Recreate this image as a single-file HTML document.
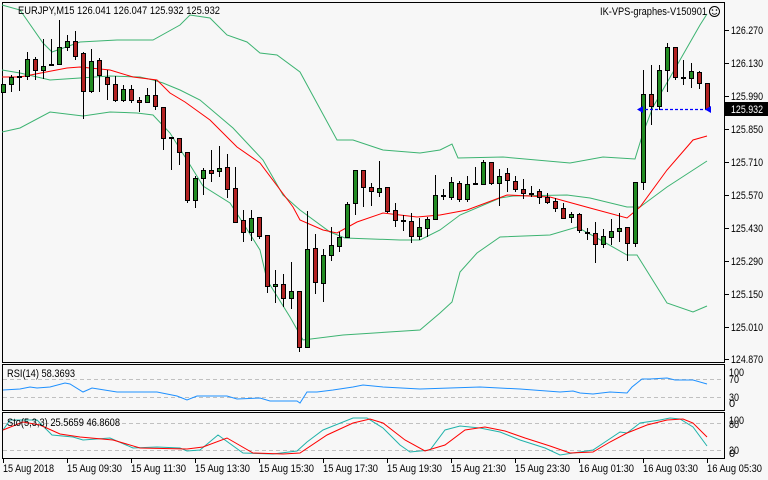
<!DOCTYPE html>
<html><head><meta charset="utf-8"><style>
html,body{margin:0;padding:0;background:#f7f7f7;}
svg{display:block;font-family:"Liberation Sans",sans-serif;font-size:11px;}
</style></head><body>
<svg width="768" height="480" viewBox="0 0 768 480" xmlns="http://www.w3.org/2000/svg">
<rect width="768" height="480" fill="#f7f7f7"/>
<g fill="none" stroke="#000" stroke-width="1" shape-rendering="crispEdges">
<rect x="2.5" y="2.5" width="722" height="360"/>
<rect x="2.5" y="364.5" width="722" height="46"/>
<rect x="2.5" y="412.5" width="722" height="46"/>
</g>
<g stroke="#c0c0c0" stroke-dasharray="4,3" shape-rendering="crispEdges">
<line x1="3" y1="379.5" x2="724" y2="379.5"/><line x1="3" y1="397.5" x2="724" y2="397.5"/>
<line x1="3" y1="423.5" x2="724" y2="423.5"/><line x1="3" y1="450.5" x2="724" y2="450.5"/>
</g>
<g fill="none" stroke="#3cb371" stroke-width="1">
<polyline points="2,5 20,10 43,43 52,52 80,42 117,40 153,40 180,25 190,15 210,18 227,35 247,42 260,53 277,55 300,72 337,140 353,140 383,150 420,153 440,150 452,144 458,158 503,157 570,163 603,157 635,159 643,133 653,107 680,60 700,25 707,14"/>
<polyline points="2,70 20,73 50,80 80,78 110,76 140,77 153,80 163,83 180,90 200,100 233,128 263,160 283,195 300,210 330,232 345,238 400,240 420,240 440,230 460,215 500,198 513,196 567,195 590,198 627,207 640,207 667,187 707,161"/>
<polyline points="2,132 20,128 50,112 83,116 110,112 137,113 153,115 170,133 187,160 203,186 230,203 243,223 260,250 267,280 290,317 303,340 343,335 420,330 440,313 452,302 460,272 477,253 500,237 550,235 577,227 597,238 627,255 637,255 667,303 693,312 707,306"/>
</g>
<polyline fill="none" stroke="#ff0000" stroke-width="1" points="2,77 20,77 67,68 80,67 110,70 133,77 157,80 170,93 185,102 210,120 237,147 260,163 293,207 300,220 323,230 337,233 357,222 383,213 417,217 440,215 467,210 507,195 550,197 590,208 627,218 640,207 667,170 693,140 707,136"/>
<g stroke="#000" stroke-width="1" shape-rendering="crispEdges">
<path d="M3.5 84V93M11.5 75V92M19.5 70V91M27.5 52V80M35.5 57V80M43.5 39V79M51.5 39V66M59.5 20V64M67.5 35V51M75.5 31V60M83.5 52V119M91.5 49V93M99.5 58V92M107.5 70V100M115.5 76V102M123.5 85V102M131.5 85V103M139.5 97V112M147.5 88V103M155.5 80V110M163.5 107V150M171.5 137V170M179.5 138V165M187.5 152V203M195.5 176V208M203.5 168V195M211.5 150V182M219.5 146V177M227.5 154V198M235.5 167V223M243.5 210V242M251.5 210V241M259.5 217V239M267.5 235V293M275.5 270V303M283.5 274V307M291.5 262V309M299.5 291V352M307.5 211V347M315.5 234V294M323.5 249V302M331.5 227V261M339.5 232V252M347.5 202V237M355.5 170V215M363.5 170V207M371.5 183V206M379.5 161V197M387.5 187V213M395.5 203V227M403.5 215V231M411.5 213V243M419.5 218V240M427.5 217V237M435.5 175V219M443.5 189V200M451.5 177V200M459.5 181V202M467.5 176V202M475.5 167V185M483.5 160V184M491.5 162V185M499.5 169V206M507.5 168V192M515.5 176V192M523.5 179V199M531.5 186V197M539.5 189V204M547.5 193V204M555.5 198V212M563.5 203V219M571.5 212V223M579.5 213V233M587.5 228V240M595.5 222V263M603.5 229V248M611.5 219V245M619.5 213V242M627.5 227V261M635.5 182V247M643.5 70V190M651.5 65V125M659.5 65V110M667.5 43V92M675.5 47V80M683.5 60V85M691.5 63V88M699.5 71V89M707.5 83V109"/>
</g>
<g stroke="#000" stroke-width="1" shape-rendering="crispEdges" fill="#228b22">
<rect x="1.5" y="84.5" width="4" height="8"/><rect x="9.5" y="77.5" width="4" height="7"/><rect x="17.5" y="76.5" width="4" height="1"/><rect x="25.5" y="59.5" width="4" height="17"/><rect x="41.5" y="66.5" width="4" height="4"/><rect x="49.5" y="64.5" width="4" height="1"/><rect x="57.5" y="47.5" width="4" height="17"/><rect x="65.5" y="41.5" width="4" height="6"/><rect x="89.5" y="61.5" width="4" height="30"/><rect x="121.5" y="89.5" width="4" height="11"/><rect x="145.5" y="95.5" width="4" height="7"/><rect x="169.5" y="137.5" width="4" height="1"/><rect x="193.5" y="178.5" width="4" height="22"/><rect x="201.5" y="170.5" width="4" height="8"/><rect x="217.5" y="168.5" width="4" height="3"/><rect x="249.5" y="218.5" width="4" height="14"/><rect x="273.5" y="284.5" width="4" height="2"/><rect x="289.5" y="291.5" width="4" height="7"/><rect x="305.5" y="249.5" width="4" height="98"/><rect x="321.5" y="255.5" width="4" height="28"/><rect x="329.5" y="245.5" width="4" height="10"/><rect x="337.5" y="237.5" width="4" height="9"/><rect x="345.5" y="204.5" width="4" height="33"/><rect x="353.5" y="170.5" width="4" height="33"/><rect x="377.5" y="188.5" width="4" height="4"/><rect x="401.5" y="220.5" width="4" height="1"/><rect x="417.5" y="227.5" width="4" height="9"/><rect x="425.5" y="219.5" width="4" height="9"/><rect x="433.5" y="195.5" width="4" height="24"/><rect x="441.5" y="195.5" width="4" height="1"/><rect x="449.5" y="182.5" width="4" height="15"/><rect x="465.5" y="184.5" width="4" height="15"/><rect x="473.5" y="183.5" width="4" height="1"/><rect x="481.5" y="162.5" width="4" height="22"/><rect x="497.5" y="176.5" width="4" height="7"/><rect x="529.5" y="193.5" width="4" height="1"/><rect x="569.5" y="214.5" width="4" height="3"/><rect x="585.5" y="232.5" width="4" height="1"/><rect x="601.5" y="236.5" width="4" height="8"/><rect x="609.5" y="231.5" width="4" height="6"/><rect x="617.5" y="228.5" width="4" height="3"/><rect x="633.5" y="182.5" width="4" height="61"/><rect x="641.5" y="94.5" width="4" height="88"/><rect x="657.5" y="70.5" width="4" height="36"/><rect x="665.5" y="47.5" width="4" height="23"/><rect x="681.5" y="77.5" width="4" height="1"/><rect x="689.5" y="71.5" width="4" height="7"/>
</g>
<g stroke="#000" stroke-width="1" shape-rendering="crispEdges" fill="#b22222">
<rect x="33.5" y="59.5" width="4" height="11"/><rect x="73.5" y="41.5" width="4" height="15"/><rect x="81.5" y="53.5" width="4" height="38"/><rect x="97.5" y="60.5" width="4" height="15"/><rect x="105.5" y="77.5" width="4" height="7"/><rect x="113.5" y="84.5" width="4" height="16"/><rect x="129.5" y="89.5" width="4" height="11"/><rect x="137.5" y="100.5" width="4" height="2"/><rect x="153.5" y="95.5" width="4" height="11"/><rect x="161.5" y="107.5" width="4" height="31"/><rect x="177.5" y="138.5" width="4" height="14"/><rect x="185.5" y="152.5" width="4" height="48"/><rect x="209.5" y="170.5" width="4" height="3"/><rect x="225.5" y="167.5" width="4" height="22"/><rect x="233.5" y="188.5" width="4" height="34"/><rect x="241.5" y="220.5" width="4" height="12"/><rect x="257.5" y="217.5" width="4" height="19"/><rect x="265.5" y="235.5" width="4" height="51"/><rect x="281.5" y="284.5" width="4" height="14"/><rect x="297.5" y="291.5" width="4" height="56"/><rect x="313.5" y="248.5" width="4" height="34"/><rect x="361.5" y="170.5" width="4" height="17"/><rect x="369.5" y="187.5" width="4" height="4"/><rect x="385.5" y="187.5" width="4" height="24"/><rect x="393.5" y="210.5" width="4" height="10"/><rect x="409.5" y="221.5" width="4" height="15"/><rect x="457.5" y="183.5" width="4" height="16"/><rect x="489.5" y="162.5" width="4" height="21"/><rect x="505.5" y="173.5" width="4" height="7"/><rect x="513.5" y="181.5" width="4" height="8"/><rect x="521.5" y="189.5" width="4" height="4"/><rect x="537.5" y="191.5" width="4" height="6"/><rect x="545.5" y="197.5" width="4" height="5"/><rect x="553.5" y="201.5" width="4" height="7"/><rect x="561.5" y="208.5" width="4" height="10"/><rect x="577.5" y="214.5" width="4" height="16"/><rect x="593.5" y="233.5" width="4" height="11"/><rect x="625.5" y="227.5" width="4" height="16"/><rect x="649.5" y="94.5" width="4" height="12"/><rect x="673.5" y="47.5" width="4" height="30"/><rect x="697.5" y="72.5" width="4" height="11"/><rect x="705.5" y="83.5" width="4" height="26"/>
</g>
<line x1="640" y1="109.5" x2="708" y2="109.5" stroke="#0000ff" stroke-width="1.2" stroke-dasharray="3,2"/>
<path d="M637 109.5 L643 106 L643 113Z M711 106 L711 113 L705 109.5Z" fill="#0000ff"/>
<polyline fill="none" stroke="#1e90ff" points="3,390 20,389 30,387 37,388 50,387 65,383 70,384 83,392 92,388 117,392 133,392 157,392 177,396 187,400 197,396 227,396 237,399 260,398 270,401 297,401 300,403 307,392 317,392 333,390 353,387 363,385 383,387 420,389 450,388 480,387 520,389 560,392 573,391 580,393 593,394 610,392 627,393 632,387 642,379 650,379 667,378 675,380 693,380 707,384"/>
<polyline fill="none" stroke="#20b2aa" points="3,430 10,420 37,420 52,435 73,437 83,440 110,438 133,448 157,447 180,448 187,451 200,450 218,435 243,453 273,454 297,451 307,442 323,430 353,418 367,418 383,428 400,445 410,452 430,450 445,430 460,426 480,428 500,432 520,440 545,448 560,455 593,450 620,432 627,433 640,423 660,420 670,418 680,419 693,427 707,446"/>
<polyline fill="none" stroke="#ff0000" points="3,430 23,422 40,425 60,434 80,437 113,440 140,448 187,449 203,447 227,438 253,453 283,454 300,453 327,435 353,423 370,419 383,423 405,440 425,451 445,445 465,430 485,427 505,431 525,438 550,446 570,453 593,452 610,442 627,433 647,425 667,420 683,419 693,423 707,437"/>
<g stroke="#000" shape-rendering="crispEdges">
<path d="M725 30.5h4M725 63.5h4M725 96.5h4M725 129.5h4M725 162.5h4M725 195.5h4M725 228.5h4M725 261.5h4M725 294.5h4M725 327.5h4M725 359.5h4"/>
<path d="M3.5 459v4M67.5 459v4M131.5 459v4M195.5 459v4M259.5 459v4M323.5 459v4M387.5 459v4M451.5 459v4M515.5 459v4M579.5 459v4M643.5 459v4M707.5 459v4"/>
</g>
<g fill="#000" lengthAdjust="spacingAndGlyphs">
<text x="731" y="34" textLength="32" lengthAdjust="spacingAndGlyphs">126.270</text><text x="731" y="67" textLength="32" lengthAdjust="spacingAndGlyphs">126.130</text><text x="731" y="100" textLength="32" lengthAdjust="spacingAndGlyphs">125.990</text><text x="731" y="133" textLength="32" lengthAdjust="spacingAndGlyphs">125.850</text><text x="731" y="166" textLength="32" lengthAdjust="spacingAndGlyphs">125.710</text><text x="731" y="199" textLength="32" lengthAdjust="spacingAndGlyphs">125.570</text><text x="731" y="232" textLength="32" lengthAdjust="spacingAndGlyphs">125.430</text><text x="731" y="265" textLength="32" lengthAdjust="spacingAndGlyphs">125.290</text><text x="731" y="298" textLength="32" lengthAdjust="spacingAndGlyphs">125.150</text><text x="731" y="331" textLength="32" lengthAdjust="spacingAndGlyphs">125.010</text><text x="731" y="363" textLength="32" lengthAdjust="spacingAndGlyphs">124.870</text>
<text x="729" y="376" textLength="15" lengthAdjust="spacingAndGlyphs">100</text><text x="729" y="383" textLength="10" lengthAdjust="spacingAndGlyphs">70</text><text x="729" y="401" textLength="10" lengthAdjust="spacingAndGlyphs">30</text><text x="729" y="407">0</text>
<text x="729" y="424" textLength="15" lengthAdjust="spacingAndGlyphs">100</text><text x="729" y="428" textLength="10" lengthAdjust="spacingAndGlyphs">80</text><text x="729" y="454" textLength="10" lengthAdjust="spacingAndGlyphs">20</text><text x="729" y="457">0</text>
</g>
<rect x="725" y="102" width="43" height="14" fill="#000"/>
<text x="731" y="113" fill="#fff" textLength="32" lengthAdjust="spacingAndGlyphs">125.932</text>
<g fill="#000">
<text x="18" y="14" textLength="202" lengthAdjust="spacingAndGlyphs">EURJPY,M15  126.041 126.047 125.932 125.932</text>
<text x="600" y="15" textLength="107" lengthAdjust="spacingAndGlyphs">IK-VPS-graphes-V150901</text>
<text x="7" y="377" textLength="68" lengthAdjust="spacingAndGlyphs">RSI(14) 58.3693</text>
<text x="7" y="426" textLength="113" lengthAdjust="spacingAndGlyphs">Sto(5,3,3) 25.5659 46.8608</text>
<text x="3" y="472" textLength="51" lengthAdjust="spacingAndGlyphs">15 Aug 2018</text><text x="67" y="472" textLength="55" lengthAdjust="spacingAndGlyphs">15 Aug 09:30</text><text x="131" y="472" textLength="55" lengthAdjust="spacingAndGlyphs">15 Aug 11:30</text><text x="195" y="472" textLength="55" lengthAdjust="spacingAndGlyphs">15 Aug 13:30</text><text x="259" y="472" textLength="55" lengthAdjust="spacingAndGlyphs">15 Aug 15:30</text><text x="323" y="472" textLength="55" lengthAdjust="spacingAndGlyphs">15 Aug 17:30</text><text x="387" y="472" textLength="55" lengthAdjust="spacingAndGlyphs">15 Aug 19:30</text><text x="451" y="472" textLength="55" lengthAdjust="spacingAndGlyphs">15 Aug 21:30</text><text x="515" y="472" textLength="55" lengthAdjust="spacingAndGlyphs">15 Aug 23:30</text><text x="579" y="472" textLength="55" lengthAdjust="spacingAndGlyphs">16 Aug 01:30</text><text x="643" y="472" textLength="55" lengthAdjust="spacingAndGlyphs">16 Aug 03:30</text><text x="707" y="472" textLength="55" lengthAdjust="spacingAndGlyphs">16 Aug 05:30</text>
</g>
<circle cx="714.5" cy="11.5" r="5" fill="none" stroke="#000"/>
<circle cx="712.5" cy="10" r="0.8" fill="#000"/><circle cx="716.5" cy="10" r="0.8" fill="#000"/>
<path d="M712 13 Q714.5 15.5 717 13" fill="none" stroke="#000" stroke-width="0.8"/>
</svg>
</body></html>
